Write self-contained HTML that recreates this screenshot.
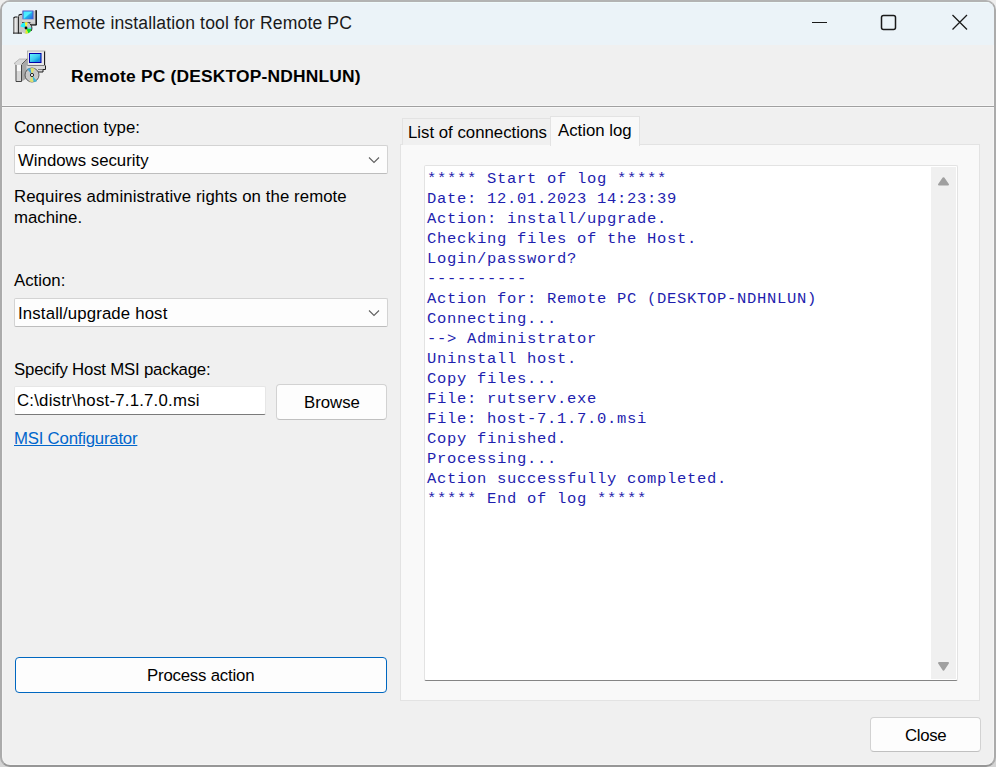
<!DOCTYPE html>
<html><head><meta charset="utf-8">
<style>
*{margin:0;padding:0;box-sizing:border-box}
html,body{width:996px;height:767px;overflow:hidden;background:linear-gradient(#eeeeee,#d4d4d4)}
body{position:relative;font-family:"Liberation Sans",sans-serif;color:#000}
.win{position:absolute;left:0;top:0;width:996px;height:767px;border-radius:10px;border:2px solid #ababab;border-top-color:#b3b3b3;border-bottom-color:#969696;background:#f0f0f0;overflow:hidden;box-shadow:inset 0 0 0 1px #f5f5f5}
.tb{position:absolute;left:0;top:0;width:996px;height:43px;background:#ebf3f8;border-top:1px solid #effafb}
.abs{position:absolute;white-space:nowrap}
.t{position:absolute;white-space:nowrap;font-size:16.8px;line-height:16.8px}
.combo{position:absolute;background:#fdfdfd;border:1px solid #d3d3d3;border-bottom-color:#bdbdbd;border-radius:2px}
.btn{position:absolute;background:#fdfdfd;border:1px solid #d2d2d2;border-bottom-color:#c0c0c0;border-radius:4px}
.log{position:absolute;font-family:"Liberation Mono",monospace;font-size:15.5px;letter-spacing:0.7px;line-height:20px;color:#1e1eae;white-space:pre}
</style></head><body>
<div class="win">
  <div class="tb"></div>
</div>

<!-- title icon -->
<svg class="abs" style="left:12px;top:8px" width="26" height="26" viewBox="0 0 26 26">
  <defs>
    <linearGradient id="scr1" x1="0" y1="0" x2="1" y2="1"><stop offset="0" stop-color="#40e8ff"/><stop offset="0.45" stop-color="#50f0ff"/><stop offset="0.55" stop-color="#20b0e8"/><stop offset="1" stop-color="#3060e0"/></linearGradient>
    <linearGradient id="tw1" x1="0" y1="0" x2="1" y2="0"><stop offset="0" stop-color="#606060"/><stop offset="0.3" stop-color="#f4f4f4"/><stop offset="0.6" stop-color="#a0a0a0"/><stop offset="1" stop-color="#808080"/></linearGradient>
  </defs>
  <path d="M1 10 L3 9 L6 8.5 L7 7 L10 6 L10 25.5 L1 25.5 Z" fill="url(#tw1)"/>
  <rect x="7" y="7" width="3" height="18.5" fill="#c8c8c8"/>
  <path d="M1.5 10 L3 9 L5.5 9 M6.5 7.5 L8 6.5 L10 6.2" fill="none" stroke="#181818" stroke-width="1.1"/>
  <rect x="6" y="8.5" width="1" height="17" fill="#303030"/>
  <rect x="1" y="24.6" width="9" height="1" fill="#202020"/>
  <rect x="10" y="2" width="14" height="15" fill="#c4c4c4"/>
  <rect x="10" y="2" width="13" height="1" fill="#e8e8e8"/>
  <rect x="10.5" y="2.5" width="11" height="9" fill="#4a58d0"/>
  <rect x="11.5" y="3.5" width="9" height="7.5" fill="url(#scr1)"/>
  <rect x="10" y="11.5" width="13" height="3" fill="#d4d4d4"/>
  <rect x="23.5" y="2.2" width="1.4" height="14.8" fill="#080808"/>
  <rect x="18" y="16.3" width="6.5" height="1.3" fill="#181818"/>
  <rect x="10" y="14.2" width="8.5" height="1" fill="#282828"/>
  <circle cx="14" cy="20" r="5.7" fill="#c8c8c8"/>
  <path d="M14 20 L8.4 18.5 A5.7 5.7 0 0 1 12.8 14.4 Z" fill="#20f0f8"/>
  <path d="M14 20 L12.8 14.4 A5.7 5.7 0 0 1 15.6 14.5 Z" fill="#f8f820"/>
  <path d="M14 20 L19.6 21.2 A5.7 5.7 0 0 1 16.2 25.3 Z" fill="#10e030"/>
  <path d="M14 20 L16.2 25.3 A5.7 5.7 0 0 1 13.4 25.6 Z" fill="#e0f020"/>
  <path d="M14 20 L19.7 19.5 A5.7 5.7 0 0 1 19.6 21.2 Z" fill="#30e8e8"/>
  <path d="M17.5 15.5 A5.7 5.7 0 0 1 19.2 23" fill="none" stroke="#202020" stroke-width="0.9"/>
  <circle cx="14" cy="20" r="1.4" fill="#080808"/>
</svg>
<div class="abs" style="left:43px;top:15px;font-size:17.6px;line-height:17.6px;letter-spacing:0.13px;color:#1a1a1a">Remote installation tool for Remote PC</div>

<!-- window controls -->
<svg class="abs" style="left:800px;top:10px" width="180" height="26" viewBox="0 0 180 26">
  <line x1="12" y1="12.5" x2="27" y2="12.5" stroke="#1a1a1a" stroke-width="1"/>
  <rect x="81.5" y="5.5" width="14" height="14" rx="2" fill="none" stroke="#1a1a1a" stroke-width="1.5"/>
  <path d="M152.5 5 L167 19.5 M167 5 L152.5 19.5" stroke="#1a1a1a" stroke-width="1.3"/>
</svg>

<!-- header -->
<svg class="abs" style="left:13px;top:50px" width="34" height="34" viewBox="0 0 34 34">
  <defs>
    <linearGradient id="scr2" x1="0" y1="0" x2="1" y2="1"><stop offset="0" stop-color="#60f4ff"/><stop offset="0.5" stop-color="#40c8f0"/><stop offset="0.75" stop-color="#10a0e0"/><stop offset="1" stop-color="#4070f0"/></linearGradient>
  </defs>
  <path d="M1 13.5 L6.5 9 L14.5 9 L8.5 14.5 L3 14.5 Z" fill="#d8d8d8" stroke="#9a9a9a" stroke-width="0.6"/>
  <path d="M14.5 9 L8.5 14.5" stroke="#202020" stroke-width="1"/>
  <path d="M8.5 14.5 L14.5 9 L14.5 28 L8.5 31.5 Z" fill="#a8a8a8"/>
  <rect x="3" y="14.5" width="5.5" height="17" fill="#f8f8f8"/>
  <rect x="3.5" y="21" width="4.5" height="10" fill="#d8d8d8"/>
  <path d="M3 15 L3 31.5 L8.5 31.5 L8.5 15" fill="none" stroke="#303030" stroke-width="0.9"/>
  <rect x="14.5" y="1" width="17.5" height="15" fill="#e8e8e8" stroke="#909090" stroke-width="0.6"/>
  <path d="M31.5 1.5 L31.5 15.5 L14.5 15.5" fill="none" stroke="#202020" stroke-width="1"/>
  <rect x="16" y="3" width="12.5" height="10" fill="#0000a8"/>
  <rect x="17" y="4" width="10.5" height="8" fill="url(#scr2)"/>
  <rect x="13.5" y="15.5" width="19" height="4" fill="#dadada"/>
  <path d="M32.5 15.5 L32.5 19.5 L25 19.5" fill="none" stroke="#202020" stroke-width="1"/>
  <rect x="25" y="19.5" width="5" height="2.5" fill="#dadada"/>
  <path d="M30 19.5 L30 22 L24 22" fill="none" stroke="#202020" stroke-width="1"/>
  <circle cx="19" cy="25" r="7" fill="#c8c8c8" stroke="#404040" stroke-width="0.8"/>
  <path d="M19 25 L14 18.8 A7 7 0 0 1 17.5 18.2 Z" fill="#40a8d8"/>
  <path d="M19 25 L17.5 18.2 A7 7 0 0 1 21.5 18.4 Z" fill="#e0e070"/>
  <path d="M19 25 L24 31.2 A7 7 0 0 1 20.5 31.8 Z" fill="#40b8d8"/>
  <path d="M19 25 L20.5 31.8 A7 7 0 0 1 16.5 31.6 Z" fill="#e0e070"/>
  <circle cx="19" cy="25" r="1.6" fill="#fff" stroke="#101010" stroke-width="0.9"/>
</svg>
<div class="abs" style="left:71px;top:68px;font-weight:bold;font-size:17.4px;line-height:17.4px;letter-spacing:0.19px">Remote PC (DESKTOP-NDHNLUN)</div>

<!-- separator -->
<div class="abs" style="left:2px;top:105px;width:992px;height:1px;background:#f6f6f6"></div>
<div class="abs" style="left:2px;top:106px;width:992px;height:1px;background:#a0a0a0"></div>
<div class="abs" style="left:2px;top:107px;width:992px;height:1px;background:#f8f8f8"></div>

<!-- left panel -->
<div class="t" style="left:14px;top:120px">Connection type:</div>
<div class="combo" style="left:14px;top:145px;width:374px;height:29px"></div>
<div class="t" style="left:18px;top:153px">Windows security</div>
<svg class="abs" style="left:367px;top:155px" width="14" height="9" viewBox="0 0 14 9"><path d="M2 2.5 L7 7.5 L12 2.5" fill="none" stroke="#606060" stroke-width="1.1"/></svg>

<div class="t" style="left:14px;top:189px;letter-spacing:0.08px">Requires administrative rights on the remote</div>
<div class="t" style="left:14px;top:210px">machine.</div>

<div class="t" style="left:14px;top:273px">Action:</div>
<div class="combo" style="left:14px;top:298px;width:374px;height:29px"></div>
<div class="t" style="left:18px;top:306px;letter-spacing:0.15px">Install/upgrade host</div>
<svg class="abs" style="left:367px;top:308px" width="14" height="9" viewBox="0 0 14 9"><path d="M2 2.5 L7 7.5 L12 2.5" fill="none" stroke="#606060" stroke-width="1.1"/></svg>

<div class="t" style="left:14px;top:362px;letter-spacing:-0.2px">Specify Host MSI package:</div>
<div class="abs" style="left:14px;top:386px;width:252px;height:29px;background:#fff;border:1px solid #e6e6e6;border-radius:2px;border-bottom:1px solid #7a7a7a"></div>
<div class="t" style="left:17px;top:393px;letter-spacing:0.22px">C:\distr\host-7.1.7.0.msi</div>

<div class="btn" style="left:276px;top:384px;width:111px;height:36px"></div>
<div class="t" style="left:304px;top:395px">Browse</div>

<div class="t" style="left:14px;top:431px;letter-spacing:-0.22px;color:#0066cc;text-decoration:underline">MSI Configurator</div>

<div class="btn" style="left:15px;top:657px;width:372px;height:36px;border:1.3px solid #0067c0"></div>
<div class="t" style="left:147px;top:668px;letter-spacing:-0.2px">Process action</div>

<!-- tabs -->
<div class="abs" style="left:400px;top:144px;width:580px;height:557px;background:#f9f9f9;border:1px solid #e3e3e3"></div>
<div class="abs" style="left:402px;top:118px;width:149px;height:27px;background:#f0f0f0;border:1px solid #e3e3e3;border-bottom:none"></div>
<div class="abs" style="left:550px;top:116px;width:90px;height:30px;background:#f9f9f9;border:1px solid #e3e3e3;border-bottom:none"></div>
<div class="t" style="left:408px;top:125px">List of connections</div>
<div class="t" style="left:558px;top:123px">Action log</div>

<!-- log box -->
<div class="abs" style="left:424px;top:165px;width:534px;height:516px;background:#fff;border:1px solid #e3e3e3;border-bottom:1px solid #858585;border-radius:2px"></div>
<div class="abs" style="left:931px;top:167px;width:25px;height:512px;background:#f0f0f0"></div>
<svg class="abs" style="left:931px;top:167px" width="25" height="512" viewBox="0 0 25 512">
  <path d="M8 17.5 L17 17.5 L12.5 11.2 Z" fill="#a0a0a0" stroke="#a0a0a0" stroke-width="2" stroke-linejoin="round"/>
  <path d="M8 496 L17 496 L12.5 502.6 Z" fill="#a0a0a0" stroke="#a0a0a0" stroke-width="2" stroke-linejoin="round"/>
</svg>
<div class="log" style="left:427px;top:169px">***** Start of log *****
Date: 12.01.2023 14:23:39
Action: install/upgrade.
Checking files of the Host.
Login/password?
----------
Action for: Remote PC (DESKTOP-NDHNLUN)
Connecting...
--&gt; Administrator
Uninstall host.
Copy files...
File: rutserv.exe
File: host-7.1.7.0.msi
Copy finished.
Processing...
Action successfully completed.
***** End of log *****</div>

<!-- close -->
<div class="btn" style="left:870px;top:717px;width:111px;height:35px"></div>
<div class="t" style="left:905px;top:728px;letter-spacing:-0.3px">Close</div>

</body></html>
